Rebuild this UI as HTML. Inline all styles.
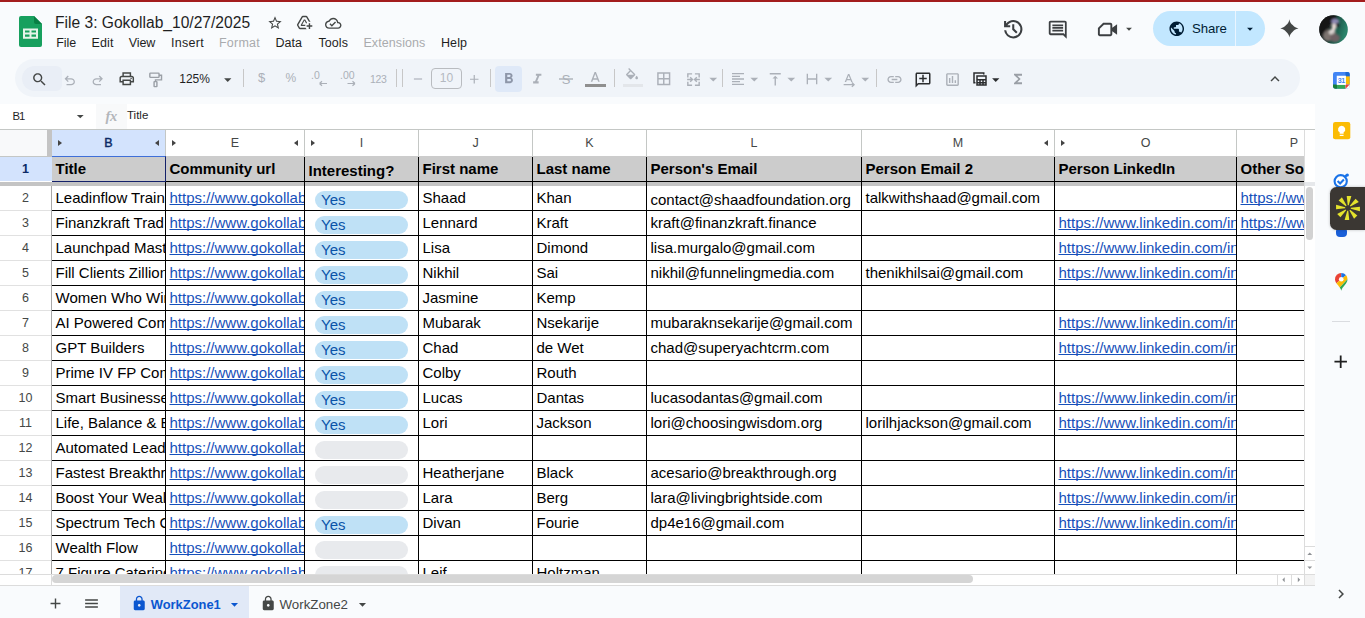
<!DOCTYPE html>
<html lang="en"><head><meta charset="utf-8"><title>File 3: Gokollab_10/27/2025 - Google Sheets</title>
<style>
*{box-sizing:border-box;margin:0;padding:0}
html,body{width:1365px;height:618px;overflow:hidden;background:#f9fbfd;font-family:"Liberation Sans",Arial,sans-serif;color:#1f1f1f}
body{position:relative}
.abs{position:absolute}
#topline{position:absolute;left:0;top:0;width:1365px;height:2px;background:#a31d1d}
#title{position:absolute;left:55px;top:11.5px;font-size:15.6px;line-height:22px;color:#1f1f1f;white-space:nowrap;letter-spacing:0}
.menu{position:absolute;top:34px;font-size:12.5px;line-height:18px;color:#1f1f1f;white-space:nowrap}
.menu.dis{color:#a9abae}
#tb{position:absolute;left:15px;top:59px;width:1285px;height:38px;border-radius:19px;background:#f0f4f9}
#fbar{position:absolute;left:0;top:104px;width:1315px;height:25px;background:#fff}
#fbar .nm{position:absolute;left:12.5px;top:4px;font-size:11.3px;line-height:16px;color:#1f1f1f;letter-spacing:-1px}
#fbar .sep{position:absolute;left:96px;top:0;width:31px;height:25px;background:#f8f9fa}
#fbar .tx{position:absolute;left:127px;top:3px;font-size:11.5px;line-height:16px;color:#1f1f1f}
#grid{position:absolute;left:0;top:129px;width:1304px;height:445px;background:#fff;overflow:hidden}
#gridbg{position:absolute;left:0;top:129px;width:1315px;height:457px;background:#fff}
.corner{position:absolute;left:0;top:0;width:47px;height:28px;background:#f8f9fa;border-top:1px solid #c4c7c5;border-bottom:1px solid #c4c7c5}
.fz-v-head{position:absolute;left:47px;top:0;width:5px;height:28px;background:#c4c4c4}
.ch{position:absolute;top:0;height:28px;background:#fff;border-top:1px solid #c4c7c5;font-size:12.5px;color:#444746;text-align:center;line-height:27px}
.ch.sel{background:#d3e3fd;color:#0b2a66;-webkit-text-stroke:0.45px #0b2a66}
.ch .cl{display:inline-block}
.chl{position:absolute;top:0;width:1px;height:28px;background:#c4c7c5}
.ar{position:absolute;top:10.25px;width:0;height:0;border-top:3.75px solid transparent;border-bottom:3.75px solid transparent}
.ar.r{border-left:4.5px solid #444}
.ar.l{border-right:4.5px solid #444}
.rh{position:absolute;left:0;width:51px;background:#fff;color:#444746;font-size:12.5px;text-align:center;line-height:24px}
.rh.sel{background:#d3e3fd;color:#0b2a66;width:52px;padding-right:1px}
.rhl{position:absolute;left:0;width:51px;height:1px;background:#e1e1e1}
.hrow{position:absolute;background:#cccccc}
.c{position:absolute;overflow:hidden;white-space:nowrap;font-size:15px;line-height:24px;padding-left:3.5px;color:#000}
.c.hd{font-weight:bold}
.c a{color:#1650ba;text-decoration:underline;text-decoration-skip-ink:none}
.hl{position:absolute;left:52px;width:1252px;height:1px;background:#000}
.vl{position:absolute;top:28px;width:1px;height:420px;background:#000}
.fz-h{position:absolute;left:0;top:53px;width:1304px;height:4px;background:#c4c4c4}
.chip{position:absolute;width:93px;height:18px;border-radius:9px;background:#e8eaed;font-size:15px;line-height:17px;padding-left:6px;color:#0a53a8;overflow:visible}
.chip.y{background:#bfe1f6}
.selbox{position:absolute;left:52px;top:27px;width:114px;height:26px;border-top:1px solid #3f6fd8;border-right:1px solid #14216a;border-bottom:1px solid #14216a}
#hs{position:absolute;left:0;top:574px;width:1315px;height:12px;background:#fff}
#bot{position:absolute;left:0;top:586px;width:1365px;height:32px;background:#f9fbfd}
#side{position:absolute;left:1315px;top:56px;width:50px;height:530px;background:#f9fbfd}
.ic{position:absolute;display:block;overflow:visible}
#share{position:absolute;left:1153px;top:11px;width:112px;height:35px;border-radius:18px;background:#c2e7ff}
#share .dv{position:absolute;left:82px;top:0;width:1px;height:35px;background:#eaf5ff}
#share span{position:absolute;left:39px;top:9px;font-size:13.2px;line-height:17px;color:#001d35;letter-spacing:-0.1px}
#avatar{position:absolute;left:1319px;top:14.5px;width:29px;height:29px;border-radius:50%;background:radial-gradient(circle at 55% 30%,#a58fb0 0,#8a7a92 12%,rgba(0,0,0,0) 26%),radial-gradient(circle at 45% 65%,#8d8078 0,#5e544f 22%,rgba(0,0,0,0) 40%),linear-gradient(90deg,#2b2228 0,#2f2a2c 55%,#1f5a48 80%,#2f7a60 100%)}
.tbh{position:absolute;border-radius:13px}
.tbt{position:absolute;line-height:17px;white-space:nowrap}
.tsep{position:absolute;top:69px;width:1px;height:18px;background:#c7c7c7}
.fsz{position:absolute;left:431px;top:68px;width:31px;height:21px;border:1px solid #b9bcc0;border-radius:4px;font-size:12px;line-height:19px;text-align:center;color:#b4b9c1}
.fx{position:absolute;left:105.5px;top:107.5px;font-family:"Liberation Serif",serif;font-style:italic;font-weight:bold;font-size:14.5px;line-height:17px;color:#b3b6ba;letter-spacing:-0.3px}
#tab1{position:absolute;left:120px;top:586px;width:129px;height:32px;background:#e1e9f7}
.tabt{position:absolute;top:595.5px;font-size:13.5px;line-height:18px;white-space:nowrap}
</style></head><body>
<div id="topline"></div>
<div id="title">File 3: Gokollab_10/27/2025</div>
<div class="menu" style="left:56.2px;letter-spacing:-0.08px">File</div>
<div class="menu" style="left:91.5px;letter-spacing:0.12px">Edit</div>
<div class="menu" style="left:128.8px;letter-spacing:-0.12px">View</div>
<div class="menu" style="left:171px;letter-spacing:0.28px">Insert</div>
<div class="menu dis" style="left:219px;letter-spacing:0.23px">Format</div>
<div class="menu" style="left:275.6px;letter-spacing:0px">Data</div>
<div class="menu" style="left:318.5px;letter-spacing:0.06px">Tools</div>
<div class="menu dis" style="left:363.4px;letter-spacing:0.09px">Extensions</div>
<div class="menu" style="left:441px;letter-spacing:0.08px">Help</div>
<div id="tb"></div>
<div id="gridbg"></div>
<div id="fbar"><span class="nm">B1</span><div class="sep"></div><span class="tx">Title</span></div>
<div id="grid">
<div class="corner"></div>
<div class="fz-v-head"></div>
<div class="ch sel" style="left:52px;width:113px"><span class="cl">B</span><i class="ar r" style="left:6px"></i><i class="ar l" style="right:6px"></i></div>
<div class="ch" style="left:166px;width:138px"><span class="cl">E</span><i class="ar r" style="left:6px"></i><i class="ar l" style="right:6px"></i></div>
<div class="chl" style="left:165px"></div>
<div class="ch" style="left:305px;width:113px"><span class="cl">I</span><i class="ar r" style="left:6px"></i></div>
<div class="chl" style="left:304px"></div>
<div class="ch" style="left:419px;width:113px"><span class="cl">J</span></div>
<div class="chl" style="left:418px"></div>
<div class="ch" style="left:533px;width:113px"><span class="cl">K</span></div>
<div class="chl" style="left:532px"></div>
<div class="ch" style="left:647px;width:214px"><span class="cl">L</span></div>
<div class="chl" style="left:646px"></div>
<div class="ch" style="left:862px;width:192px"><span class="cl">M</span><i class="ar l" style="right:6px"></i></div>
<div class="chl" style="left:861px"></div>
<div class="ch" style="left:1055px;width:181px"><span class="cl">O</span><i class="ar r" style="left:6px"></i></div>
<div class="chl" style="left:1054px"></div>
<div class="ch" style="left:1237px;width:114px"><span class="cl">P</span></div>
<div class="chl" style="left:1236px"></div>
<div class="rh sel" style="top:28px;height:24px"><b>1</b></div>
<div class="hrow" style="left:52px;top:27px;width:1252px;height:26px"></div>
<div class="c hd" style="left:52px;top:28px;width:113px;height:24px">Title</div>
<div class="c hd" style="left:166px;top:28px;width:138px;height:24px">Community url</div>
<div class="c hd" style="left:305px;top:30px;width:113px;height:22px">Interesting?</div>
<div class="c hd" style="left:419px;top:28px;width:113px;height:24px">First name</div>
<div class="c hd" style="left:533px;top:28px;width:113px;height:24px">Last name</div>
<div class="c hd" style="left:647px;top:28px;width:214px;height:24px">Person's Email</div>
<div class="c hd" style="left:862px;top:28px;width:192px;height:24px">Person Email 2</div>
<div class="c hd" style="left:1055px;top:28px;width:181px;height:24px">Person LinkedIn</div>
<div class="c hd" style="left:1237px;top:28px;width:114px;height:24px">Other Social</div>
<div class="hl" style="top:52px"></div>
<div class="fz-h"></div>
<div class="rh" style="top:57px;height:24px">2</div>
<div class="rhl" style="top:81px"></div>
<div class="c" style="left:52px;top:57px;width:113px;height:24px">Leadinflow Training</div>
<div class="c" style="left:166px;top:57px;width:138px;height:24px"><a>https://www.gokollab.com</a></div>
<div class="chip y" style="left:315px;top:61.5px">Yes</div>
<div class="c" style="left:419px;top:57px;width:113px;height:24px">Shaad</div>
<div class="c" style="left:533px;top:57px;width:113px;height:24px">Khan</div>
<div class="c" style="left:647px;top:59px;width:214px;height:24px">contact@shaadfoundation.org</div>
<div class="c" style="left:862px;top:57px;width:192px;height:24px">talkwithshaad@gmail.com</div>
<div class="c" style="left:1237px;top:57px;width:114px;height:24px"><a>https://www.</a></div>
<div class="hl" style="top:81px"></div>
<div class="rh" style="top:82px;height:24px">3</div>
<div class="rhl" style="top:106px"></div>
<div class="c" style="left:52px;top:82px;width:113px;height:24px">Finanzkraft Trad</div>
<div class="c" style="left:166px;top:82px;width:138px;height:24px"><a>https://www.gokollab.com</a></div>
<div class="chip y" style="left:315px;top:86.5px">Yes</div>
<div class="c" style="left:419px;top:82px;width:113px;height:24px">Lennard</div>
<div class="c" style="left:533px;top:82px;width:113px;height:24px">Kraft</div>
<div class="c" style="left:647px;top:82px;width:214px;height:24px">kraft@finanzkraft.finance</div>
<div class="c" style="left:1055px;top:82px;width:181px;height:24px"><a>https://www.linkedin.com/in/</a></div>
<div class="c" style="left:1237px;top:82px;width:114px;height:24px"><a>https://www.</a></div>
<div class="hl" style="top:106px"></div>
<div class="rh" style="top:107px;height:24px">4</div>
<div class="rhl" style="top:131px"></div>
<div class="c" style="left:52px;top:107px;width:113px;height:24px">Launchpad Mastermind</div>
<div class="c" style="left:166px;top:107px;width:138px;height:24px"><a>https://www.gokollab.com</a></div>
<div class="chip y" style="left:315px;top:111.5px">Yes</div>
<div class="c" style="left:419px;top:107px;width:113px;height:24px">Lisa</div>
<div class="c" style="left:533px;top:107px;width:113px;height:24px">Dimond</div>
<div class="c" style="left:647px;top:107px;width:214px;height:24px">lisa.murgalo@gmail.com</div>
<div class="c" style="left:1055px;top:107px;width:181px;height:24px"><a>https://www.linkedin.com/in/</a></div>
<div class="hl" style="top:131px"></div>
<div class="rh" style="top:132px;height:24px">5</div>
<div class="rhl" style="top:156px"></div>
<div class="c" style="left:52px;top:132px;width:113px;height:24px">Fill Clients Zillion</div>
<div class="c" style="left:166px;top:132px;width:138px;height:24px"><a>https://www.gokollab.com</a></div>
<div class="chip y" style="left:315px;top:136.5px">Yes</div>
<div class="c" style="left:419px;top:132px;width:113px;height:24px">Nikhil</div>
<div class="c" style="left:533px;top:132px;width:113px;height:24px">Sai</div>
<div class="c" style="left:647px;top:132px;width:214px;height:24px">nikhil@funnelingmedia.com</div>
<div class="c" style="left:862px;top:132px;width:192px;height:24px">thenikhilsai@gmail.com</div>
<div class="c" style="left:1055px;top:132px;width:181px;height:24px"><a>https://www.linkedin.com/in/</a></div>
<div class="hl" style="top:156px"></div>
<div class="rh" style="top:157px;height:24px">6</div>
<div class="rhl" style="top:181px"></div>
<div class="c" style="left:52px;top:157px;width:113px;height:24px">Women Who Win</div>
<div class="c" style="left:166px;top:157px;width:138px;height:24px"><a>https://www.gokollab.com</a></div>
<div class="chip y" style="left:315px;top:161.5px">Yes</div>
<div class="c" style="left:419px;top:157px;width:113px;height:24px">Jasmine</div>
<div class="c" style="left:533px;top:157px;width:113px;height:24px">Kemp</div>
<div class="hl" style="top:181px"></div>
<div class="rh" style="top:182px;height:24px">7</div>
<div class="rhl" style="top:206px"></div>
<div class="c" style="left:52px;top:182px;width:113px;height:24px">AI Powered Community</div>
<div class="c" style="left:166px;top:182px;width:138px;height:24px"><a>https://www.gokollab.com</a></div>
<div class="chip y" style="left:315px;top:186.5px">Yes</div>
<div class="c" style="left:419px;top:182px;width:113px;height:24px">Mubarak</div>
<div class="c" style="left:533px;top:182px;width:113px;height:24px">Nsekarije</div>
<div class="c" style="left:647px;top:182px;width:214px;height:24px">mubaraknsekarije@gmail.com</div>
<div class="c" style="left:1055px;top:182px;width:181px;height:24px"><a>https://www.linkedin.com/in/</a></div>
<div class="hl" style="top:206px"></div>
<div class="rh" style="top:207px;height:24px">8</div>
<div class="rhl" style="top:231px"></div>
<div class="c" style="left:52px;top:207px;width:113px;height:24px">GPT Builders</div>
<div class="c" style="left:166px;top:207px;width:138px;height:24px"><a>https://www.gokollab.com</a></div>
<div class="chip y" style="left:315px;top:211.5px">Yes</div>
<div class="c" style="left:419px;top:207px;width:113px;height:24px">Chad</div>
<div class="c" style="left:533px;top:207px;width:113px;height:24px">de Wet</div>
<div class="c" style="left:647px;top:207px;width:214px;height:24px">chad@superyachtcrm.com</div>
<div class="c" style="left:1055px;top:207px;width:181px;height:24px"><a>https://www.linkedin.com/in/</a></div>
<div class="hl" style="top:231px"></div>
<div class="rh" style="top:232px;height:24px">9</div>
<div class="rhl" style="top:256px"></div>
<div class="c" style="left:52px;top:232px;width:113px;height:24px">Prime IV FP Community</div>
<div class="c" style="left:166px;top:232px;width:138px;height:24px"><a>https://www.gokollab.com</a></div>
<div class="chip y" style="left:315px;top:236.5px">Yes</div>
<div class="c" style="left:419px;top:232px;width:113px;height:24px">Colby</div>
<div class="c" style="left:533px;top:232px;width:113px;height:24px">Routh</div>
<div class="hl" style="top:256px"></div>
<div class="rh" style="top:257px;height:24px">10</div>
<div class="rhl" style="top:281px"></div>
<div class="c" style="left:52px;top:257px;width:113px;height:24px">Smart Businesses</div>
<div class="c" style="left:166px;top:257px;width:138px;height:24px"><a>https://www.gokollab.com</a></div>
<div class="chip y" style="left:315px;top:261.5px">Yes</div>
<div class="c" style="left:419px;top:257px;width:113px;height:24px">Lucas</div>
<div class="c" style="left:533px;top:257px;width:113px;height:24px">Dantas</div>
<div class="c" style="left:647px;top:257px;width:214px;height:24px">lucasodantas@gmail.com</div>
<div class="c" style="left:1055px;top:257px;width:181px;height:24px"><a>https://www.linkedin.com/in/</a></div>
<div class="hl" style="top:281px"></div>
<div class="rh" style="top:282px;height:24px">11</div>
<div class="rhl" style="top:306px"></div>
<div class="c" style="left:52px;top:282px;width:113px;height:24px">Life, Balance & Business</div>
<div class="c" style="left:166px;top:282px;width:138px;height:24px"><a>https://www.gokollab.com</a></div>
<div class="chip y" style="left:315px;top:286.5px">Yes</div>
<div class="c" style="left:419px;top:282px;width:113px;height:24px">Lori</div>
<div class="c" style="left:533px;top:282px;width:113px;height:24px">Jackson</div>
<div class="c" style="left:647px;top:282px;width:214px;height:24px">lori@choosingwisdom.org</div>
<div class="c" style="left:862px;top:282px;width:192px;height:24px">lorilhjackson@gmail.com</div>
<div class="c" style="left:1055px;top:282px;width:181px;height:24px"><a>https://www.linkedin.com/in/</a></div>
<div class="hl" style="top:306px"></div>
<div class="rh" style="top:307px;height:24px">12</div>
<div class="rhl" style="top:331px"></div>
<div class="c" style="left:52px;top:307px;width:113px;height:24px">Automated Leads</div>
<div class="c" style="left:166px;top:307px;width:138px;height:24px"><a>https://www.gokollab.com</a></div>
<div class="chip" style="left:315px;top:311.5px"></div>
<div class="hl" style="top:331px"></div>
<div class="rh" style="top:332px;height:24px">13</div>
<div class="rhl" style="top:356px"></div>
<div class="c" style="left:52px;top:332px;width:113px;height:24px">Fastest Breakthrough</div>
<div class="c" style="left:166px;top:332px;width:138px;height:24px"><a>https://www.gokollab.com</a></div>
<div class="chip" style="left:315px;top:336.5px"></div>
<div class="c" style="left:419px;top:332px;width:113px;height:24px">Heatherjane</div>
<div class="c" style="left:533px;top:332px;width:113px;height:24px">Black</div>
<div class="c" style="left:647px;top:332px;width:214px;height:24px">acesario@breakthrough.org</div>
<div class="c" style="left:1055px;top:332px;width:181px;height:24px"><a>https://www.linkedin.com/in/</a></div>
<div class="hl" style="top:356px"></div>
<div class="rh" style="top:357px;height:24px">14</div>
<div class="rhl" style="top:381px"></div>
<div class="c" style="left:52px;top:357px;width:113px;height:24px">Boost Your Wealth</div>
<div class="c" style="left:166px;top:357px;width:138px;height:24px"><a>https://www.gokollab.com</a></div>
<div class="chip" style="left:315px;top:361.5px"></div>
<div class="c" style="left:419px;top:357px;width:113px;height:24px">Lara</div>
<div class="c" style="left:533px;top:357px;width:113px;height:24px">Berg</div>
<div class="c" style="left:647px;top:357px;width:214px;height:24px">lara@livingbrightside.com</div>
<div class="c" style="left:1055px;top:357px;width:181px;height:24px"><a>https://www.linkedin.com/in/</a></div>
<div class="hl" style="top:381px"></div>
<div class="rh" style="top:382px;height:24px">15</div>
<div class="rhl" style="top:406px"></div>
<div class="c" style="left:52px;top:382px;width:113px;height:24px">Spectrum Tech Community</div>
<div class="c" style="left:166px;top:382px;width:138px;height:24px"><a>https://www.gokollab.com</a></div>
<div class="chip y" style="left:315px;top:386.5px">Yes</div>
<div class="c" style="left:419px;top:382px;width:113px;height:24px">Divan</div>
<div class="c" style="left:533px;top:382px;width:113px;height:24px">Fourie</div>
<div class="c" style="left:647px;top:382px;width:214px;height:24px">dp4e16@gmail.com</div>
<div class="c" style="left:1055px;top:382px;width:181px;height:24px"><a>https://www.linkedin.com/in/</a></div>
<div class="hl" style="top:406px"></div>
<div class="rh" style="top:407px;height:24px">16</div>
<div class="rhl" style="top:431px"></div>
<div class="c" style="left:52px;top:407px;width:113px;height:24px">Wealth Flow</div>
<div class="c" style="left:166px;top:407px;width:138px;height:24px"><a>https://www.gokollab.com</a></div>
<div class="chip" style="left:315px;top:411.5px"></div>
<div class="hl" style="top:431px"></div>
<div class="rh" style="top:432px;height:24px">17</div>
<div class="rhl" style="top:456px"></div>
<div class="c" style="left:52px;top:432px;width:113px;height:24px">7 Figure Catering</div>
<div class="c" style="left:166px;top:432px;width:138px;height:24px"><a>https://www.gokollab.com</a></div>
<div class="chip" style="left:315px;top:436.5px"></div>
<div class="c" style="left:419px;top:432px;width:113px;height:24px">Leif</div>
<div class="c" style="left:533px;top:432px;width:113px;height:24px">Holtzman</div>
<div class="hl" style="top:456px"></div>
<div class="vl" style="left:165px"></div>
<div class="vl" style="left:304px"></div>
<div class="vl" style="left:418px"></div>
<div class="vl" style="left:532px"></div>
<div class="vl" style="left:646px"></div>
<div class="vl" style="left:861px"></div>
<div class="vl" style="left:1054px"></div>
<div class="vl" style="left:1236px"></div>
<div class="vl" style="left:51px;top:57px;width:1px;background:#a8a8a8"></div>
<div class="selbox"></div>
</div>
<div class="abs" style="left:0;top:129px;width:1315px;height:1px;background:#c4c7c5"></div>
<div id="hs"></div>
<div id="bot"></div>
<div id="side"></div>
<svg class="ic" style="left:19px;top:16px" width="23" height="31" viewBox="0 0 23 31"><path fill="#17a05e" d="M2 0h13l8 8v21a2 2 0 0 1-2 2H2a2 2 0 0 1-2-2V2a2 2 0 0 1 2-2z"/><path fill="#087f44" d="M15 0l8 8h-6a2 2 0 0 1-2-2z"/><path fill="#e6f4ea" d="M4 12.400h15v10.400H4zm2 2v2.200h4.500v-2.200zm6.500 0v2.200H17v-2.200zM6 18.600v2.200h4.500v-2.200zm6.500 0v2.200H17v-2.200z"/></svg>
<svg class="ic" style="left:267.20px;top:14.80px" width="16" height="16" viewBox="0 0 24 24"><path fill="#444746" d="M22 9.240l-7.190-.620L12 2 9.190 8.630 2 9.240l5.460 4.730L5.820 21 12 17.270 18.180 21l-1.630-7.030L22 9.240zM12 15.400l-3.760 2.270 1-4.280-3.320-2.880 4.380-.380L12 6.100l1.710 4.040 4.380.380-3.320 2.880 1 4.280L12 15.400z"/></svg>
<svg class="ic" style="left:296.00px;top:14.10px" width="17" height="17" viewBox="0 0 24 24"><path fill="#444746" d="M20 21v-3h3v-2h-3v-3h-2v3h-3v2h3v3h2zm-4.970.500H5.660c-.720 0-1.380-.380-1.730-1L1.570 16.400c-.360-.620-.350-1.380.010-2L7.920 3.490c.360-.610 1.020-.990 1.730-.990h4.700c.710 0 1.370.380 1.730.990l4.480 7.710c-.500-.130-1.020-.200-1.560-.200-.280 0-.560.020-.830.060L14.350 4.500h-4.700L3.310 15.410l2.350 4.090h7.890c.350.770.850 1.450 1.480 2zM13.340 15c-.220.630-.340 1.300-.340 2H7.250l-.730-1.270 4.580-7.980h1.800l2.740 4.770c-.440.320-.830.700-1.160 1.130L12 9.250 8.690 15h4.650z"/></svg>
<svg class="ic" style="left:324.75px;top:14.95px" width="16.5" height="16.5" viewBox="0 0 24 24"><path fill="#444746" d="M19.350 10.040C18.670 6.590 15.640 4 12 4 9.110 4 6.600 5.640 5.350 8.040 2.340 8.360 0 10.910 0 14c0 3.310 2.690 6 6 6h13c2.760 0 5-2.240 5-5 0-2.640-2.050-4.780-4.650-4.960zM19 18H6c-2.210 0-4-1.790-4-4 0-2.050 1.530-3.760 3.560-3.970l1.070-.110.500-.950C8.080 7.140 9.940 6 12 6c2.620 0 4.880 1.860 5.390 4.430l.300 1.500 1.530.110c1.560.100 2.780 1.410 2.780 2.960 0 1.650-1.350 3-3 3zm-9-3.820l-2.090-2.090L6.500 13.500 10 17l6.010-6.010-1.410-1.410z"/></svg>
<svg class="ic" style="left:1001.45px;top:16.65px" width="24.5" height="24.5" viewBox="0 -960 960 960"><path fill="#3c3f42" d="M480-120q-138 0-240.500-91.500T122-440h82q14 104 92.500 172T480-200q117 0 198.500-81.500T760-480q0-117-81.500-198.500T480-760q-69 0-129 32t-101 88h110v80H120v-240h80v94q51-64 124.500-99T480-840q75 0 140.500 28.500t114 77q48.500 48.500 77 114T840-480q0 75-28.500 140.500t-77 114q-48.500 48.500-114 77T480-120Zm112-192L440-464v-216h80v184l128 128-56 56Z"/></svg>
<svg class="ic" style="left:1047.25px;top:18.75px" width="21.5" height="21.5" viewBox="0 0 24 24"><path fill="#3c3f42" d="M21.990 4c0-1.100-.890-2-1.990-2H4c-1.100 0-2 .900-2 2v12c0 1.100.900 2 2 2h14l4 4-.010-18zM20 4v13.170L18.830 16H4V4h16zM6 12h12v2H6zm0-3h12v2H6zm0-3h12v2H6z"/></svg>
<svg class="ic" style="left:1096.20px;top:18.40px" width="23" height="23" viewBox="0 0 24 24"><path fill="#3c3f42" d="M7.500 5H15c1.100 0 2 .900 2 2v3.200L22 6.500v11L17 13.800V17c0 1.100-.900 2-2 2H4c-1.100 0-2-.900-2-2V10.500L7.500 5zm.830 2L4 11.330V17h11V7H8.330z"/></svg>
<svg class="ic" style="left:1122.00px;top:21.50px" width="14" height="14" viewBox="0 0 24 24"><path fill="#444746" d="M7 10l5 5 5-5z"/></svg>
<div id="share"><div class="dv"></div><span>Share</span></div>
<svg class="ic" style="left:1168.05px;top:19.85px" width="17.5" height="17.5" viewBox="0 0 24 24"><path fill="#001d35" d="M12 2C6.480 2 2 6.480 2 12s4.480 10 10 10 10-4.480 10-10S17.520 2 12 2zm-1 17.930c-3.950-.490-7-3.850-7-7.930 0-.620.080-1.210.210-1.790L9 15v1c0 1.100.900 2 2 2v1.930zm6.900-2.540c-.260-.810-1-1.390-1.900-1.390h-1v-3c0-.550-.450-1-1-1H8v-2h2c.550 0 1-.450 1-1V7h2c1.100 0 2-.900 2-2v-.410c2.930 1.190 5 4.060 5 7.410 0 2.080-.800 3.970-2.100 5.390z"/></svg>
<svg class="ic" style="left:1243.00px;top:22.20px" width="14" height="14" viewBox="0 0 24 24"><path fill="#001d35" d="M7 10l5 5 5-5z"/></svg>
<svg class="ic" style="left:1279.00px;top:18.10px" width="20.8" height="20.8" viewBox="0 0 24 24"><path fill="#444746" d="M12 1.50 C12.30 5.00 14.40 7.00 15.80 8.20 C17.00 9.60 19.00 11.70 22.50 12.00 C19.00 12.30 17.00 14.40 15.80 15.80 C14.40 17.00 12.30 19.00 12.00 22.50 C11.70 19.00 9.60 17.00 8.20 15.80 C7.00 14.40 5.00 12.30 1.50 12.00 C5.00 11.70 7.00 9.60 8.20 8.20 C9.60 7.00 11.70 5.00 12.00 1.50z"/></svg>
<svg class="ic" style="left:1319px;top:14.500px" width="29" height="29" viewBox="0 0 29 29"><defs><clipPath id="avc"><circle cx="14.500" cy="14.500" r="14.300"/></clipPath><filter id="avb" x="-20%" y="-20%" width="140%" height="140%"><feGaussianBlur stdDeviation="0.900"/></filter><linearGradient id="avg" x1="0" y1="0" x2="1" y2="0.300"><stop offset="0" stop-color="#17161a"/><stop offset="0.450" stop-color="#1b2a28"/><stop offset="0.700" stop-color="#1d5c4c"/><stop offset="1" stop-color="#2a836a"/></linearGradient></defs><g clip-path="url(#avc)"><rect width="29" height="29" fill="url(#avg)"/><g filter="url(#avb)"><path d="M0 0h17v6l-6 4-7 10-4 3z" fill="#141317"/><ellipse cx="10.500" cy="20" rx="7" ry="5.500" transform="rotate(-35 10.500 20)" fill="#7d736f"/><ellipse cx="16" cy="23" rx="5" ry="4" fill="#6d5f62"/><ellipse cx="13" cy="16.500" rx="3.500" ry="2.200" transform="rotate(-40 13 16.500)" fill="#d9d2cf"/><ellipse cx="15" cy="11.500" rx="2.300" ry="3.600" fill="#e4d6d2"/><ellipse cx="16.300" cy="6.300" rx="3.900" ry="2.500" fill="#8d88b4"/><ellipse cx="18.500" cy="10" rx="1.600" ry="2.500" fill="#2a2630"/></g></g></svg>
<div class="tbh" style="left:21.500px;top:65.500px;width:40.500px;height:25.500px;background:#e9eef6;border-radius:13px 6px 6px 13px"></div>
<svg class="ic" style="left:30.80px;top:70.50px" width="17" height="17" viewBox="0 0 24 24"><path fill="#444746" d="M15.5 14h-.79l-.28-.27C15.41 12.59 16 11.11 16 9.5 16 5.91 13.09 3 9.5 3S3 5.91 3 9.5 5.91 16 9.5 16c1.61 0 3.09-.59 4.23-1.57l.27.28v.79l5 4.99L20.49 19l-4.99-5zm-6 0C7.01 14 5 11.99 5 9.5S7.01 5 9.5 5 14 7.01 14 9.5 11.99 14 9.5 14z"/></svg>
<svg class="ic" style="left:61.55px;top:73.05px" width="15.5" height="15.5" viewBox="0 -960 960 960"><path fill="#abb0b8" d="M280-200v-80h284q63 0 109.500-40T720-420q0-60-46.500-100T564-560H312l104 104-56 56-200-200 200-200 56 56-104 104h252q97 0 166.500 63T800-420q0 94-69.500 157T564-200H280Z"/></svg>
<svg class="ic" style="left:90.25px;top:73.05px" width="15.5" height="15.5" viewBox="0 -960 960 960"><path fill="#abb0b8" d="M396-200q-97 0-166.500-63T160-420q0-94 69.500-157T396-640h252L544-744l56-56 200 200-200 200-56-56 104-104H396q-63 0-109.500 40T240-420q0 60 46.500 100T396-280h284v80H396Z"/></svg>
<svg class="ic" style="left:118.45px;top:70.25px" width="17.5" height="17.5" viewBox="0 0 24 24"><path fill="#444746" d="M19 8h-1V3H6v5H5c-1.66 0-3 1.34-3 3v6h4v4h12v-4h4v-6c0-1.66-1.34-3-3-3zM8 5h8v3H8V5zm8 12v2H8v-4h8v2zm2-2v-2H6v2H4v-4c0-.55.45-1 1-1h14c.55 0 1 .45 1 1v4h-2zM18 10.5a1 1 0 1 0 0 2 1 1 0 0 0 0-2z"/></svg>
<svg class="ic" style="left:146.500px;top:70.500px" width="17" height="17" viewBox="0 0 24 24"><g fill="none" stroke="#9a9fa6" stroke-width="2"><rect x="4" y="3" width="13" height="6" rx="1"/><path d="M17 6h3.500v6.500H12V15"/><rect x="10" y="15" width="4" height="7" rx="0.500"/></g></svg>
<div class="tbt" style="left:179.300px;top:70.500px;font-size:12px;color:#1f1f1f;letter-spacing:-0.05px">125%</div>
<svg class="ic" style="left:219.05px;top:70.85px" width="17.5" height="17.5" viewBox="0 0 24 24"><path fill="#444746" d="M7 10l5 5 5-5z"/></svg>
<div class="tsep" style="left:243px"></div>
<div class="tbt" style="left:258px;top:69px;font-size:13px;color:#abb0b8">$</div>
<div class="tbt" style="left:285.500px;top:70px;font-size:12px;color:#abb0b8">%</div>
<svg class="ic" style="left:310px;top:68px" width="20" height="22" viewBox="0 0 20 22"><text x="1" y="11" font-family="Liberation Sans,sans-serif" font-size="10.500" fill="#abb0b8">.0</text><path d="M9.500 15.500h7.500M9.500 15.500l2.500-2.300M9.500 15.500l2.500 2.300" stroke="#abb0b8" stroke-width="1.200" fill="none"/></svg>
<svg class="ic" style="left:339px;top:68px" width="20" height="22" viewBox="0 0 20 22"><text x="1" y="11" font-family="Liberation Sans,sans-serif" font-size="10.500" fill="#abb0b8">.00</text><path d="M8.500 15.500h7.500M16 15.500l-2.500-2.300M16 15.500l-2.500 2.300" stroke="#abb0b8" stroke-width="1.200" fill="none"/></svg>
<div class="tbt" style="left:370px;top:71px;font-size:10.500px;color:#abb0b8;letter-spacing:-0.3px">123</div>
<div class="tsep" style="left:396px"></div>
<div class="tsep" style="left:402px"></div>
<svg class="ic" style="left:410.60px;top:72.00px" width="14" height="14" viewBox="0 0 24 24"><path fill="#abb0b8" d="M19 13H5v-2h14v2z"/></svg>
<div class="fsz">10</div>
<svg class="ic" style="left:467.35px;top:71.75px" width="14.5" height="14.5" viewBox="0 0 24 24"><path fill="#abb0b8" d="M19 13h-6v6h-2v-6H5v-2h6V5h2v6h6v2z"/></svg>
<div class="tsep" style="left:490px"></div>
<div class="tbh" style="left:494.500px;top:65.500px;width:27px;height:26px;background:#dfe9f8;border-radius:4px"></div>
<svg class="ic" style="left:499.55px;top:70.25px" width="17.5" height="17.5" viewBox="0 0 24 24"><path fill="#8e97a9" d="M15.6 10.79c.97-.67 1.65-1.77 1.65-2.79 0-2.26-1.75-4-4-4H7v14h7.04c2.09 0 3.71-1.7 3.71-3.79 0-1.52-.86-2.82-2.15-3.42zM10 6.5h3c.83 0 1.5.67 1.5 1.5s-.67 1.5-1.5 1.5h-3v-3zm3.5 9H10v-3h3.5c.83 0 1.5.67 1.5 1.5s-.67 1.5-1.5 1.5z"/></svg>
<svg class="ic" style="left:528.55px;top:70.75px" width="16.5" height="16.5" viewBox="0 0 24 24"><path fill="#abb0b8" d="M10 4v3h2.21l-3.42 8H6v3h8v-3h-2.21l3.42-8H18V4z"/></svg>
<svg class="ic" style="left:557px;top:69px" width="18" height="20" viewBox="0 0 18 20"><text x="9" y="14.500" text-anchor="middle" font-family="Liberation Sans,sans-serif" font-size="13" fill="#abb0b8">S</text><path d="M2 10h14" stroke="#abb0b8" stroke-width="1.400"/></svg>
<svg class="ic" style="left:587.15px;top:70.25px" width="16.5" height="16.5" viewBox="0 0 24 24"><path fill="#abb0b8" d="M11 3L5.5 17h2.25l1.12-3h6.25l1.12 3h2.25L13 3h-2zm-1.38 9L12 5.67 14.38 12H9.62z"/></svg>
<div class="abs" style="left:585px;top:84px;width:21px;height:3px;background:#8f8f8f"></div>
<div class="tsep" style="left:614px"></div>
<svg class="ic" style="left:624.30px;top:68.20px" width="16" height="16" viewBox="0 0 24 24"><path fill="#abb0b8" d="M16.56 8.94L7.62 0 6.21 1.41l2.38 2.38-5.15 5.15c-.59.59-.59 1.54 0 2.12l5.5 5.5c.29.29.68.44 1.06.44s.77-.15 1.06-.44l5.5-5.5c.59-.58.59-1.53 0-2.12zM5.21 10L10 5.21 14.79 10H5.21zM19 11.5s-2 2.17-2 3.5c0 1.1.9 2 2 2s2-.9 2-2c0-1.33-2-3.5-2-3.5z"/></svg>
<div class="abs" style="left:622.500px;top:84px;width:20px;height:3px;background:#e3e6ea"></div>
<svg class="ic" style="left:654.65px;top:70.25px" width="17.5" height="17.5" viewBox="0 0 24 24"><path fill="#abb0b8" d="M3 3v18h18V3H3zm8 16H5v-6h6v6zm0-8H5V5h6v6zm8 8h-6v-6h6v6zm0-8h-6V5h6v6z"/></svg>
<svg class="ic" style="left:684.50px;top:70.50px" width="17" height="17" viewBox="0 0 24 24"><path fill="#abb0b8" d="M3 3h7v2H5v4H3zM3 15h2v4h5v2H3zM14 3h7v6h-2V5h-5zM19 15h2v6h-7v-2h5zM3 11h5.2L6.6 9.4 8 8l4 4-4 4-1.4-1.4L8.2 13H3zM21 11h-5.2l1.6-1.6L16 8l-4 4 4 4 1.4-1.4-1.6-1.6H21z"/></svg>
<svg class="ic" style="left:703.55px;top:70.15px" width="18.5" height="18.5" viewBox="0 0 24 24"><path fill="#abb0b8" d="M7 10l5 5 5-5z"/></svg>
<div class="tsep" style="left:722px"></div>
<svg class="ic" style="left:730.40px;top:71.00px" width="16" height="16" viewBox="0 0 24 24"><path fill="#abb0b8" d="M15 15H3v2h12v-2zm0-8H3v2h12V7zM3 13h18v-2H3v2zm0 8h18v-2H3v2zM3 3v2h18V3H3z"/></svg>
<svg class="ic" style="left:744.55px;top:70.15px" width="18.5" height="18.5" viewBox="0 0 24 24"><path fill="#abb0b8" d="M7 10l5 5 5-5z"/></svg>
<svg class="ic" style="left:766.65px;top:70.75px" width="16.5" height="16.5" viewBox="0 0 24 24"><path fill="#abb0b8" d="M8 11h3v10h2V11h3l-4-4-4 4zM4 3v2h16V3H4z"/></svg>
<svg class="ic" style="left:781.95px;top:70.15px" width="18.5" height="18.5" viewBox="0 0 24 24"><path fill="#abb0b8" d="M7 10l5 5 5-5z"/></svg>
<svg class="ic" style="left:803.80px;top:71.00px" width="16" height="16" viewBox="0 0 24 24"><path fill="#abb0b8" d="M4 4h2v16H4zM18 4h2v16h-2zM6 11h12v2H6z"/></svg>
<svg class="ic" style="left:818.95px;top:70.15px" width="18.5" height="18.5" viewBox="0 0 24 24"><path fill="#abb0b8" d="M7 10l5 5 5-5z"/></svg>
<svg class="ic" style="left:840.50px;top:71.50px" width="16" height="16" viewBox="0 0 24 24"><path fill="#abb0b8" d="M10.5 3L5.6 15h2.1l1-2.6h5.6l1 2.6h2.1L12.500 3h-2zm-1.1 7.600L11.500 5.200l2.100 5.400H9.400zM4 18h13.200l-1.600-1.600L17 15l4 4-4 4-1.400-1.400 1.600-1.600H4z"/></svg>
<svg class="ic" style="left:856.15px;top:70.15px" width="18.5" height="18.5" viewBox="0 0 24 24"><path fill="#abb0b8" d="M7 10l5 5 5-5z"/></svg>
<div class="tsep" style="left:876px"></div>
<svg class="ic" style="left:885.60px;top:70.50px" width="17" height="17" viewBox="0 0 24 24"><path fill="#abb0b8" d="M3.9 12c0-1.71 1.39-3.1 3.1-3.1h4V7H7c-2.76 0-5 2.24-5 5s2.24 5 5 5h4v-1.9H7c-1.71 0-3.1-1.39-3.1-3.1zM8 13h8v-2H8v2zm9-6h-4v1.9h4c1.71 0 3.1 1.39 3.1 3.1s-1.39 3.1-3.1 3.1h-4V17h4c2.76 0 5-2.24 5-5s-2.24-5-5-5z"/></svg>
<svg class="ic" style="left:914.20px;top:70.50px" width="18" height="18" viewBox="0 0 24 24"><path fill="#2b2d2f" d="M2 4c0-1.1.9-2 2-2h16c1.1 0 2 .9 2 2v12c0 1.1-.9 2-2 2H6l-4 4V4zm2 13.17L5.170 16H20V4H4v13.170zM11 5h2v4h4v2h-4v4h-2v-4H7V9h4z"/></svg>
<svg class="ic" style="left:944.20px;top:70.50px" width="17" height="17" viewBox="0 0 24 24"><path fill="#abb0b8" d="M9 17H7v-7h2v7zm4 0h-2V7h2v10zm4 0h-2v-4h2v4zm2 2H5V5h14v14zm0-16H5c-1.1 0-2 .9-2 2v14c0 1.1.9 2 2 2h14c1.1 0 2-.9 2-2V5c0-1.1-.9-2-2-2z"/></svg>
<svg class="ic" style="left:971.00px;top:70.00px" width="18" height="18" viewBox="0 0 24 24"><path fill="#2b2d2f" d="M3 3h15v3h-2V5H5v11h1v2H3zM7 7h14v14H7zm2 2v3h10V9zm0 5v2h2v-2zm4 0v2h2v-2zm4 0v2h2v-2zm-8 4v1h2v-1zm4 0v1h2v-1zm4 0v1h2v-1z"/></svg>
<svg class="ic" style="left:986.75px;top:70.85px" width="17.5" height="17.5" viewBox="0 0 24 24"><path fill="#2b2d2f" d="M7 10l5 5 5-5z"/></svg>
<svg class="ic" style="left:1010.00px;top:71.00px" width="16" height="16" viewBox="0 0 24 24"><path fill="#9a9fa6" d="M18 4H6v2l6.5 6L6 18v2h12v-3h-7l5-5-5-5h7z"/></svg>
<svg class="ic" style="left:1265.60px;top:70.00px" width="18" height="18" viewBox="0 0 24 24"><path fill="#444746" d="M12 8l-6 6 1.41 1.41L12 10.83l4.59 4.58L18 14z"/></svg>
<svg class="ic" style="left:72.05px;top:108.15px" width="16.5" height="16.5" viewBox="0 0 24 24"><path fill="#444746" d="M7 10l5 5 5-5z"/></svg>
<div class="fx">fx</div>
<svg class="ic" style="left:46.70px;top:594.50px" width="17" height="17" viewBox="0 0 24 24"><path fill="#444746" d="M19 13h-6v6h-2v-6H5v-2h6V5h2v6h6v2z"/></svg>
<svg class="ic" style="left:82.50px;top:594.50px" width="17" height="17" viewBox="0 0 24 24"><path fill="#444746" d="M3 18h18v-2H3v2zm0-5h18v-2H3v2zm0-7v2h18V6H3z"/></svg>
<div id="tab1"></div>
<svg class="ic" style="left:131.25px;top:594.95px" width="16.5" height="16.5" viewBox="0 0 24 24"><path fill="#0b57d0" d="M18 8h-1V6c0-2.760-2.240-5-5-5S7 3.240 7 6v2H6c-1.100 0-2 .900-2 2v10c0 1.100.900 2 2 2h12c1.100 0 2-.900 2-2V10c0-1.100-.900-2-2-2zm-6 9c-1.100 0-2-.900-2-2s.900-2 2-2 2 .900 2 2-.900 2-2 2zm3.100-9H8.900V6c0-1.710 1.390-3.100 3.100-3.100 1.710 0 3.100 1.390 3.100 3.100v2z"/></svg>
<div class="tabt" style="left:150.800px;color:#0b57d0;font-weight:bold;font-size:12.900px">WorkZone1</div>
<svg class="ic" style="left:226.10px;top:595.70px" width="17" height="17" viewBox="0 0 24 24"><path fill="#0b57d0" d="M7 10l5 5 5-5z"/></svg>
<svg class="ic" style="left:259.75px;top:594.95px" width="16.5" height="16.5" viewBox="0 0 24 24"><path fill="#444746" d="M18 8h-1V6c0-2.760-2.240-5-5-5S7 3.240 7 6v2H6c-1.100 0-2 .900-2 2v10c0 1.100.900 2 2 2h12c1.100 0 2-.900 2-2V10c0-1.100-.900-2-2-2zm-6 9c-1.100 0-2-.900-2-2s.900-2 2-2 2 .900 2 2-.900 2-2 2zm3.100-9H8.900V6c0-1.710 1.390-3.100 3.100-3.100 1.710 0 3.100 1.390 3.100 3.100v2z"/></svg>
<div class="tabt" style="left:279.500px;color:#444746;font-size:13.300px">WorkZone2</div>
<svg class="ic" style="left:354.30px;top:595.70px" width="17" height="17" viewBox="0 0 24 24"><path fill="#444746" d="M7 10l5 5 5-5z"/></svg>
<svg class="ic" style="left:1332.00px;top:585.00px" width="18" height="18" viewBox="0 0 24 24"><path fill="#444746" d="M10 6L8.590 7.410 13.170 12l-4.580 4.590L10 18l6-6z"/></svg>
<div class="abs" style="left:52px;top:575px;width:921px;height:8px;border-radius:4px;background:#d5d5d5"></div>
<div class="abs" style="left:0;top:574px;width:1315px;height:1px;background:#dcdcdc"></div>
<div class="abs" style="left:0;top:585px;width:1315px;height:1px;background:#dcdcdc"></div>
<div class="abs" style="left:51px;top:574px;width:1px;height:11px;background:#dcdcdc"></div>
<div class="abs" style="left:1277px;top:574px;width:1px;height:11px;background:#dcdcdc"></div>
<div class="abs" style="left:1291px;top:574px;width:1px;height:11px;background:#dcdcdc"></div>
<div class="abs" style="left:1304px;top:575px;width:11px;height:10px;background:#f3f3f3"></div>
<div class="abs" style="left:1304px;top:130px;width:1px;height:455px;background:#dcdcdc"></div>
<svg class="ic" style="left:1277.65px;top:574.25px" width="11.5" height="11.5" viewBox="0 0 24 24"><path fill="#8f9296" d="M14 7l-5 5 5 5z"/></svg>
<svg class="ic" style="left:1292.85px;top:574.25px" width="11.5" height="11.5" viewBox="0 0 24 24"><path fill="#8f9296" d="M10 17l5-5-5-5z"/></svg>
<div class="abs" style="left:1305px;top:182px;width:10px;height:4px;background:#e6e8eb"></div>
<div class="abs" style="left:1305.500px;top:187px;width:7.500px;height:53px;border-radius:4px;background:#d2d2d2"></div>
<div class="abs" style="left:1304px;top:546px;width:11px;height:1px;background:#dcdcdc"></div>
<div class="abs" style="left:1304px;top:560px;width:11px;height:1px;background:#dcdcdc"></div>
<svg class="ic" style="left:1304.300px;top:547.500px" width="11.500" height="11.500" viewBox="0 0 24 24"><path fill="#8f9296" d="M7 14.500l5-5 5 5z"/></svg>
<svg class="ic" style="left:1304.300px;top:561.500px" width="11.500" height="11.500" viewBox="0 0 24 24"><path fill="#8f9296" d="M7 9.500l5 5 5-5z"/></svg>
<svg class="ic" style="left:1332.500px;top:71.500px" width="16.700" height="16.700" viewBox="0 0 20 20"><rect x="0" y="0" width="20" height="20" rx="2.500" fill="#4285f4"/><path d="M0 15h5v5H2.500A2.500 2.500 0 0 1 0 17.500z" fill="#188038"/><rect x="5" y="15" width="10" height="5" fill="#34a853"/><rect x="15" y="5" width="5" height="10" fill="#fbbc04"/><path d="M15 0h2.500A2.500 2.500 0 0 1 20 2.500V5h-5z" fill="#1967d2"/><path d="M15 15h5v5h-5z" fill="#f9fbfd"/><path d="M15 15h5l-5 5z" fill="#ea4335"/><rect x="4.500" y="4.500" width="11" height="11" fill="#fff"/><text x="9.800" y="13.300" text-anchor="middle" font-family="Liberation Sans,sans-serif" font-size="8.500" font-weight="bold" fill="#4285f4" letter-spacing="-0.600">31</text></svg>
<svg class="ic" style="left:1332.500px;top:122.200px" width="17.300" height="17.300" viewBox="0 0 20 20"><rect width="20" height="20" rx="2.500" fill="#fbbc04"/><path fill="#fff" d="M10 4.200a4.200 4.200 0 0 0-2.300 7.700V13.500h4.600v-1.600A4.200 4.200 0 0 0 10 4.200zM7.800 14.600h4.400v1.600H7.800z"/></svg>
<svg class="ic" style="left:1330px;top:170px" width="22" height="22" viewBox="0 0 22 22"><circle cx="10.700" cy="11.200" r="6.100" fill="#fff" stroke="#1a73e8" stroke-width="2.100"/><path d="M7.600 10.900l2.500 2.500 3.800-3.900" fill="none" stroke="#1a73e8" stroke-width="2.100"/><path d="M14.500 7.300l2.700-2.700" stroke="#1a73e8" stroke-width="2.400"/><circle cx="17.400" cy="5" r="1.500" fill="#1a73e8"/></svg>
<div class="abs" style="left:1335.500px;top:229px;width:11px;height:8px;border-radius:2px 2px 4px 4px;background:#1a5fd8"></div>
<div class="abs" style="left:1330px;top:187px;width:36px;height:42.500px;border-radius:6.500px 0 0 6.500px;background:#3b3733;box-shadow:0 0 3px rgba(0,0,0,.25)"></div>
<svg class="ic" style="left:1333.800px;top:194.300px" width="28" height="28" viewBox="-14 -14 28 28"><g fill="#e4e32c"><path d="M-0.500 -2.800L-2.300 -11.800L2.300 -12.200L0.500 -2.800z" transform="rotate(5)"/><path d="M-0.500 -2.800L-2.300 -11.800L2.300 -12.200L0.500 -2.800z" transform="rotate(50)"/><path d="M-0.500 -2.800L-2.300 -11.800L2.300 -12.200L0.500 -2.800z" transform="rotate(95)"/><path d="M-0.500 -2.800L-2.300 -11.800L2.300 -12.200L0.500 -2.800z" transform="rotate(140)"/><path d="M-0.500 -2.800L-2.300 -11.800L2.300 -12.200L0.500 -2.800z" transform="rotate(185)"/><path d="M-0.500 -2.800L-2.300 -11.800L2.300 -12.200L0.500 -2.800z" transform="rotate(230)"/><path d="M-0.500 -2.800L-2.300 -11.800L2.300 -12.200L0.500 -2.800z" transform="rotate(275)"/><path d="M-0.500 -2.800L-2.300 -11.800L2.300 -12.200L0.500 -2.800z" transform="rotate(320)"/></g></svg>
<svg class="ic" style="left:1334.600px;top:273.200px" width="12.500" height="17.800" viewBox="0 0 14 20"><path d="M7 0a7 7 0 0 0-7 7c0 1.700.600 3.200 1.500 4.400L7 7z" fill="#ea4335"/><path d="M7 0v7l5.400-4.500A7 7 0 0 0 7 0z" fill="#1a73e8"/><path d="M12.400 2.500L1.500 11.400c1.200 1.600 2.700 3 3.800 5L14 7c0-1.700-.600-3.300-1.600-4.500z" fill="#fbbc04"/><path d="M14 7l-8.700 9.400C6.200 17.600 6.700 18.800 7 20c.500-2.400 2.200-4.500 4-6.600C12.700 11.500 14 9.600 14 7z" fill="#34a853"/><circle cx="7" cy="7" r="2.600" fill="#fff"/></svg>
<div class="abs" style="left:1332px;top:321px;width:18px;height:1px;background:#dadce0"></div>
<svg class="ic" style="left:1330.10px;top:351.10px" width="21.4" height="21.4" viewBox="0 0 24 24"><path fill="#1f1f1f" d="M19 13h-6v6h-2v-6H5v-2h6V5h2v6h6v2z"/></svg>
</body></html>
